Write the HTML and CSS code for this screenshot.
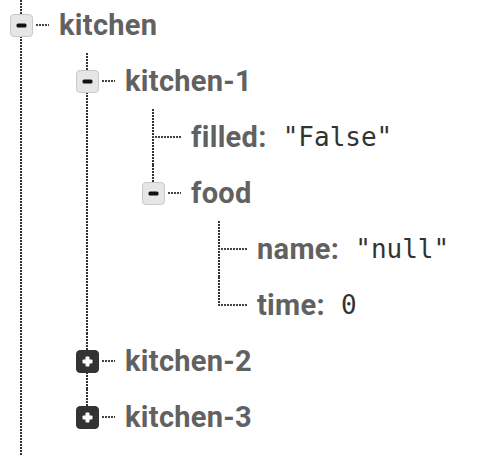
FILE: index.html
```html
<html lang="en">
<head>
    <meta charset="UTF-8">
    <title>Database tree</title>
    <link rel="stylesheet" href="styles.css">
</head>
<body>

    <ul class="tree root">
        <li class="node">
            <div class="row">
                <span class="toggle open"><svg viewBox="0 0 23 23" width="23" height="23"><rect x="6.5" y="9.5" width="10" height="4" rx="1.5" fill="#111"/></svg></span>
                <span class="dash"></span>
                <span class="key">kitchen</span>
            </div>

            <ul class="tree">
                <li class="node">
                    <div class="row">
                        <span class="toggle open"><svg viewBox="0 0 23 23" width="23" height="23"><rect x="6.5" y="9.5" width="10" height="4" rx="1.5" fill="#111"/></svg></span>
                        <span class="dash"></span>
                        <span class="key">kitchen-1</span>
                    </div>

                    <ul class="tree">
                        <li class="leaf">
                            <div class="row">
                                <span class="elbow"></span>
                                <span class="key">filled:</span>
                                <span class="value">"False"</span>
                            </div>
                        </li>
                        <li class="node last">
                            <div class="row">
                                <span class="toggle open"><svg viewBox="0 0 23 23" width="23" height="23"><rect x="6.5" y="9.5" width="10" height="4" rx="1.5" fill="#111"/></svg></span>
                                <span class="dash"></span>
                                <span class="key">food</span>
                            </div>

                            <ul class="tree">
                                <li class="leaf">
                                    <div class="row">
                                        <span class="elbow"></span>
                                        <span class="key">name:</span>
                                        <span class="value">"null"</span>
                                    </div>
                                </li>
                                <li class="leaf last">
                                    <div class="row">
                                        <span class="elbow"></span>
                                        <span class="key">time:</span>
                                        <span class="value">0</span>
                                    </div>
                                </li>
                            </ul>
                        </li>
                    </ul>
                </li>

                <li class="node">
                    <div class="row">
                        <span class="toggle closed"><svg viewBox="0 0 23 23" width="23" height="23"><rect x="6.5" y="9.5" width="10" height="4" rx="1" fill="#fff"/><rect x="9.5" y="6.5" width="4" height="10" rx="1" fill="#fff"/></svg></span>
                        <span class="dash"></span>
                        <span class="key">kitchen-2</span>
                    </div>
                </li>

                <li class="node last">
                    <div class="row">
                        <span class="toggle closed"><svg viewBox="0 0 23 23" width="23" height="23"><rect x="6.5" y="9.5" width="10" height="4" rx="1" fill="#fff"/><rect x="9.5" y="6.5" width="4" height="10" rx="1" fill="#fff"/></svg></span>
                        <span class="dash"></span>
                        <span class="key">kitchen-3</span>
                    </div>
                </li>
            </ul>
        </li>
    </ul>

</body>
</html>
```

FILE: styles.css
```css
html, body {
    overflow: hidden;
}

body {
    margin: 0;
    background: #fff;
    font-family: Roboto, "Liberation Sans", sans-serif;
}

.tree {
    list-style: none;
    margin: 0 0 0 66px;
    padding: 0;
}

.tree.root {
    margin: -3px 0 0 20px;
}

.tree.root > li {
    padding-bottom: 11px;
}

/* the dotted line that runs down the left of every child list */
.tree > li {
    background: repeating-linear-gradient(to bottom, #333 0 2px, transparent 2px 3px) no-repeat 0 0 / 2px 100%;
}

.tree > li.last {
    background-size: 2px 28px;
}

.row {
    display: flex;
    align-items: center;
    height: 56px;
}

.toggle {
    display: block;
    width: 23px;
    height: 23px;
    margin-left: -10px;
    margin-right: 3px;
    box-sizing: border-box;
    border-radius: 4px;
}

.toggle svg {
    display: block;
    margin: -1px;
}

.toggle.open {
    background: #e6e6e6;
    border: 1px solid #c9c9c9;
}

.toggle.closed {
    background: #333;
    border: 1px solid #333;
}

.dash {
    width: 13px;
    height: 2px;
    margin-right: 10px;
    background: repeating-linear-gradient(to right, #444 0 2px, transparent 2px 3px);
}

.elbow {
    width: 30px;
    height: 2px;
    margin-right: 9px;
    background: repeating-linear-gradient(to right, #444 0 2px, transparent 2px 3px);
}

.key {
    font-size: 29px;
    font-weight: 700;
    letter-spacing: 0.3px;
    color: #616161;
}

.value {
    margin-left: 16px;
    font-family: "DejaVu Sans Mono", "Liberation Mono", monospace;
    font-size: 26px;
    color: #333;
}
```
